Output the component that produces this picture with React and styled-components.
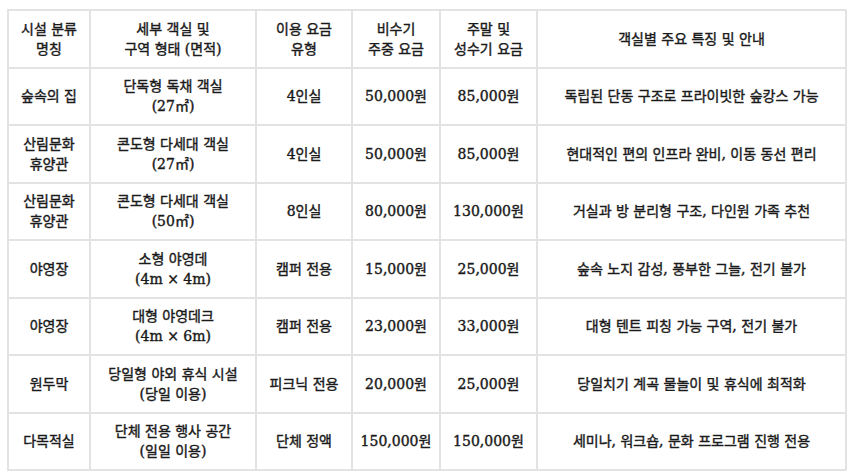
import React from "react";
import styled, { createGlobalStyle } from "styled-components";

const Global = createGlobalStyle`
  html, body { margin: 0; padding: 0; background: #ffffff; }
  body { padding: 9px 0 0 7px; }
`;

const Table = styled.table`
  border-collapse: collapse;
  table-layout: fixed;
  width: 838px;
  font-family: "DejaVu Serif", "Noto Sans CJK KR", serif;
  font-size: 14px;
  color: #1a1a1a;
`;

const Row = styled.tr`
  height: 57.5px;
`;

const Cell = styled.td`
  border: 2px solid #e3e3e3;
  padding: 0 6px;
  text-align: center;
  vertical-align: middle;
  line-height: 20px;
  font-weight: 400;
  -webkit-text-stroke: 0.4px #1a1a1a;
`;

const cols = [82, 166, 96, 88, 97, 309];

const header = [
  ["시설 분류", "명칭"],
  ["세부 객실 및", "구역 형태 (면적)"],
  ["이용 요금", "유형"],
  ["비수기", "주중 요금"],
  ["주말 및", "성수기 요금"],
  ["객실별 주요 특징 및 안내"],
];

const rows = [
  [["숲속의 집"], ["단독형 독채 객실", "(27㎡)"], ["4인실"], ["50,000원"], ["85,000원"], ["독립된 단동 구조로 프라이빗한 숲캉스 가능"]],
  [["산림문화", "휴양관"], ["콘도형 다세대 객실", "(27㎡)"], ["4인실"], ["50,000원"], ["85,000원"], ["현대적인 편의 인프라 완비, 이동 동선 편리"]],
  [["산림문화", "휴양관"], ["콘도형 다세대 객실", "(50㎡)"], ["8인실"], ["80,000원"], ["130,000원"], ["거실과 방 분리형 구조, 다인원 가족 추천"]],
  [["야영장"], ["소형 야영데", "(4m × 4m)"], ["캠퍼 전용"], ["15,000원"], ["25,000원"], ["숲속 노지 감성, 풍부한 그늘, 전기 불가"]],
  [["야영장"], ["대형 야영데크", "(4m × 6m)"], ["캠퍼 전용"], ["23,000원"], ["33,000원"], ["대형 텐트 피칭 가능 구역, 전기 불가"]],
  [["원두막"], ["당일형 야외 휴식 시설", "(당일 이용)"], ["피크닉 전용"], ["20,000원"], ["25,000원"], ["당일치기 계곡 물놀이 및 휴식에 최적화"]],
  [["다목적실"], ["단체 전용 행사 공간", "(일일 이용)"], ["단체 정액"], ["150,000원"], ["150,000원"], ["세미나, 워크숍, 문화 프로그램 진행 전용"]],
];

const Lines = ({ lines }) =>
  lines.map((l, i) => (
    <React.Fragment key={i}>
      {i > 0 && <br />}
      {l}
    </React.Fragment>
  ));

export default function App() {
  return (
    <>
      <Global />
      <Table>
        <colgroup>
          {cols.map((w, i) => (
            <col key={i} style={{ width: w }} />
          ))}
        </colgroup>
        <thead>
          <Row>
            {header.map((h, i) => (
              <Cell as="th" key={i}>
                <Lines lines={h} />
              </Cell>
            ))}
          </Row>
        </thead>
        <tbody>
          {rows.map((r, ri) => (
            <Row key={ri}>
              {r.map((c, ci) => (
                <Cell key={ci}>
                  <Lines lines={c} />
                </Cell>
              ))}
            </Row>
          ))}
        </tbody>
      </Table>
    </>
  );
}
